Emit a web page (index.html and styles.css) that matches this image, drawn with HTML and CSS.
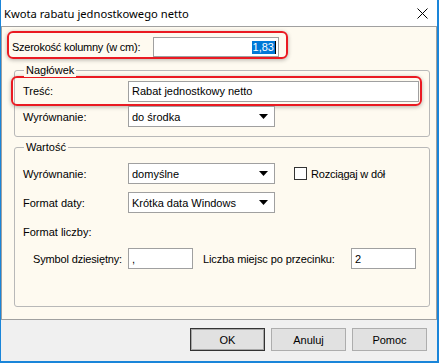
FILE: index.html
```html
<!DOCTYPE html>
<html lang="pl">
<head>
<meta charset="utf-8">
<title>Kwota rabatu jednostkowego netto</title>
<link rel="stylesheet" href="styles.css">
</head>
<body>
<div class="window">
  <div class="titlebar">
    <span class="title">Kwota rabatu jednostkowego netto</span>
    <svg class="close" width="11" height="11" viewBox="0 0 11 11"><path d="M0.5 0.5 L10.5 10.5 M10.5 0.5 L0.5 10.5" stroke="#000" stroke-width="1" fill="none"/></svg>
  </div>
  <div class="content">
    <div class="hl hl-width">
      <span class="lbl-width">Szerokość kolumny (w cm):</span>
      <div class="edit edit-width"><span class="sel">1,83</span><span class="caret"></span></div>
    </div>

    <div class="group group-head">
      <span class="legend">Nagłówek</span>
      <div class="hl hl-text">
        <span class="lbl">Treść:</span>
        <div class="edit edit-text">Rabat jednostkowy netto</div>
      </div>
      <div class="row">
        <span class="lbl">Wyrównanie:</span>
        <div class="combo"><span class="combo-val">do środka</span><svg class="arrow" width="9" height="5" viewBox="0 0 9 5"><polygon points="0,0 9,0 4.5,5" fill="#000"/></svg></div>
      </div>
    </div>

    <div class="group group-value">
      <span class="legend">Wartość</span>
      <div class="row row-first">
        <span class="lbl">Wyrównanie:</span>
        <div class="combo"><span class="combo-val">domyślne</span><svg class="arrow" width="9" height="5" viewBox="0 0 9 5"><polygon points="0,0 9,0 4.5,5" fill="#000"/></svg></div>
        <span class="check"></span>
        <span class="check-lbl">Rozciągaj w dół</span>
      </div>
      <div class="row row-gap">
        <span class="lbl">Format daty:</span>
        <div class="combo"><span class="combo-val">Krótka data Windows</span><svg class="arrow" width="9" height="5" viewBox="0 0 9 5"><polygon points="0,0 9,0 4.5,5" fill="#000"/></svg></div>
      </div>
      <div class="row row-gap">
        <span class="lbl">Format liczby:</span>
      </div>
      <div class="row row-num">
        <span class="lbl lbl-sym">Symbol dziesiętny:</span>
        <div class="edit edit-small">,</div>
        <span class="lbl-places">Liczba miejsc po przecinku:</span>
        <div class="edit edit-small edit-places">2</div>
      </div>
    </div>
  </div>
  <div class="footer">
    <button class="btn btn-default">OK</button>
    <button class="btn">Anuluj</button>
    <button class="btn">Pomoc</button>
  </div>
</div>
</body>
</html>
```

FILE: styles.css
```css
* { box-sizing: border-box; }
html, body { margin: 0; padding: 0; }
body {
  width: 439px;
  height: 363px;
  overflow: hidden;
  font-family: "Liberation Sans", Arial, sans-serif;
  font-size: 11px;
  color: #000;
  background: #fff;
}
.window {
  width: 439px;
  height: 363px;
  border-left: 1px solid #1a85d9;
  border-right: 2px solid #1a85d9;
  border-bottom: 2px solid #1a85d9;
  display: flex;
  flex-direction: column;
}
.titlebar {
  height: 26px;
  flex: 0 0 26px;
  background: #fff;
  display: flex;
  align-items: center;
  justify-content: space-between;
  padding: 0 9px 0 3px;
}
.title {
  font-family: "Noto Sans", "Open Sans", sans-serif;
  font-size: 11.2px;
  color: #000;
}
.close { display: block; margin-top: 1px; }

.content {
  height: 294px;
  flex: 0 0 294px;
  border: 1px solid #a0a0a0;
  background: #fefaf0;
  padding: 4px 0 0 5px;
}

.hl {
  border: 2px solid #ea1a22;
  border-radius: 6px;
  box-shadow: 0 1px 4px rgba(0, 0, 0, 0.3);
  display: flex;
  align-items: center;
}
.hl-width {
  width: 281px;
  height: 28px;
  padding: 4px 0 0 3px;
}
.lbl-width { width: 141px; flex: 0 0 141px; white-space: nowrap; letter-spacing: -0.25px; }

.edit {
  height: 21px;
  background: #fff;
  border: 1px solid #a0a0a0;
  display: flex;
  align-items: center;
  padding-left: 3px;
  white-space: nowrap;
}
.edit-width {
  width: 126px;
  height: 20px;
  justify-content: flex-end;
  padding: 0 2px 0 0;
}
.sel {
  background: #0078d7;
  color: #fff;
  line-height: 13px;
  padding: 0 1px;
}
.caret {
  width: 1px;
  height: 13px;
  background: #000;
}

.group {
  position: relative;
  width: 416px;
  margin-left: 7px;
  border: 1px solid #b8b8b8;
  border-radius: 3px;
}
.legend {
  position: absolute;
  left: 9px;
  top: -8px;
  line-height: 14px;
  padding: 0 2px;
  background: #fefaf0;
}
.group-head {
  margin-top: 11px;
  height: 67px;
  padding: 5px 0 0 8px;
}
.hl-text {
  width: 411px;
  height: 30px;
  margin-left: -12px;
  padding: 0 0 0 10px;
}
.edit-text { width: 291px; }

.row {
  display: flex;
  align-items: center;
  height: 21px;
  white-space: nowrap;
}
.lbl { width: 105px; flex: 0 0 105px; white-space: nowrap; }

.combo {
  width: 147px;
  height: 21px;
  background: #fff;
  border: 1px solid #a0a0a0;
  display: flex;
  align-items: center;
  justify-content: space-between;
  padding: 0 6px 0 3px;
}
.arrow { display: block; }

.group-value {
  margin-top: 10px;
  height: 160px;
  padding: 15px 0 0 8px;
}
.row-gap { margin-top: 8px; }
.check {
  width: 13px;
  height: 13px;
  margin-left: 19px;
  border: 1px solid #333;
  background: #fff;
}
.check-lbl { margin-left: 4px; letter-spacing: -0.2px; }

.row-num { margin-top: 6px; }
.lbl-sym { padding-left: 10px; letter-spacing: -0.15px; }
.edit-small { width: 65px; }
.lbl-places { margin-left: 10px; width: 148px; letter-spacing: -0.1px; }

.footer {
  flex: 1;
  background: #f0f0f0;
  display: flex;
  justify-content: flex-end;
  align-items: flex-start;
  gap: 6px;
  padding: 8px 10px 0 0;
}
.btn {
  width: 75px;
  height: 23px;
  background: #e1e1e1;
  border: 1px solid #adadad;
  font-family: "Liberation Sans", Arial, sans-serif;
  font-size: 11px;
  color: #000;
  padding: 0;
  margin: 0;
}
.btn-default {
  border: 1px solid #333;
  box-shadow: inset 0 0 0 1px #a8a8a8;
}
```
